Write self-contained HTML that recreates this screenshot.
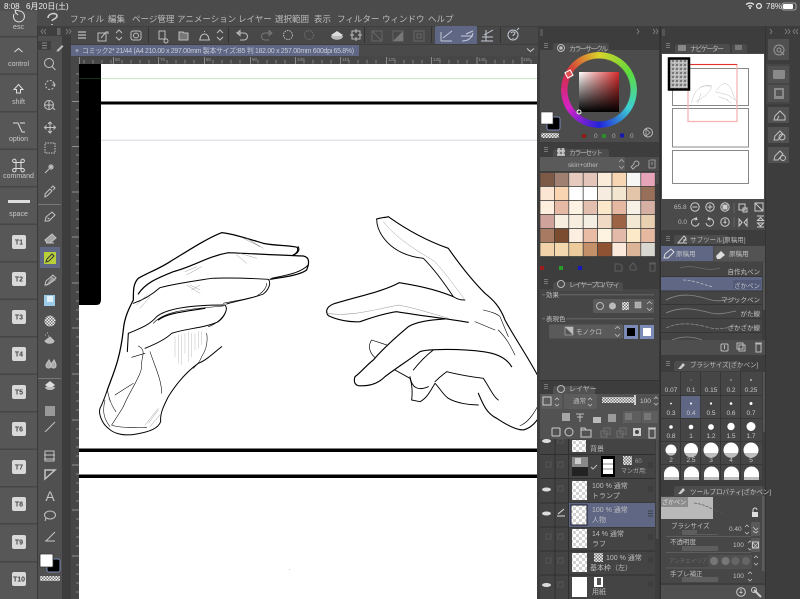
<!DOCTYPE html>
<html><head><meta charset="utf-8">
<style>
html,body{margin:0;padding:0;background:#3d3d3d;width:800px;height:599px;overflow:hidden}
#r{position:absolute;left:0;top:0;width:800px;height:599px;overflow:hidden;filter:blur(.3px)}
svg{position:absolute;left:0;top:0;display:block}
text{font-family:"Liberation Sans","Noto Sans CJK JP",sans-serif}
.w{position:absolute;left:561px;top:52px;width:76px;height:76px;border-radius:50%;opacity:.93;background:conic-gradient(#e6dc28 0deg,#5fe63c 60deg,#3cdcdc 120deg,#2020e6 180deg,#e020d0 240deg,#e02c3c 300deg,#e6dc28 360deg);-webkit-mask:radial-gradient(circle,transparent 31px,#000 32px);mask:radial-gradient(circle,transparent 31px,#000 32px)}
.s{position:absolute;left:579px;top:72px;width:40px;height:40px;background:linear-gradient(to bottom,transparent,#000),linear-gradient(to right,#fff,#d82c2c)}
</style></head><body><div id="r">
<svg width="800" height="599" viewBox="0 0 800 599">
<defs>
<pattern id="c" width="6" height="6" patternUnits="userSpaceOnUse"><rect width="6" height="6" fill="#fff"/><rect width="3" height="3" fill="#d2d2d2"/><rect x="3" y="3" width="3" height="3" fill="#d2d2d2"/></pattern>
<pattern id="n" width="4" height="4" patternUnits="userSpaceOnUse"><rect width="4" height="4" fill="#b8b8b8"/><rect width="2" height="2" fill="#777"/><rect x="2" y="2" width="1" height="1" fill="#e0e0e0"/></pattern>
<pattern id="k" width="3" height="3" patternUnits="userSpaceOnUse"><rect width="3" height="3" fill="#eee"/><rect width="1.5" height="1.5" fill="#777"/><rect x="1.5" y="1.5" width="1.5" height="1.5" fill="#777"/></pattern>
</defs>
<rect width="800" height="599" fill="#3d3d3d"/>
<!-- top -->
<rect width="800" height="26" fill="#4b4b4b"/>
<path d="M48 18c0-5 9-6 9-2 0 3-5 3-5 5M52 24v1" fill="none" stroke="#ccc" stroke-width="1.6"/>
<g fill="#bcbcbc" font-size="8.500"><text x="70" y="22">ファイル</text><text x="108" y="22">編集</text><text x="132" y="22">ページ管理</text><text x="177" y="22">アニメーション</text><text x="238" y="22">レイヤー</text><text x="275" y="22">選択範囲</text><text x="314" y="22">表示</text><text x="337" y="22">フィルター</text><text x="382" y="22">ウィンドウ</text><text x="428" y="22">ヘルプ</text></g>
<!-- keys -->
<rect x="0" y="0" width="37" height="599" fill="#575757"/>
<rect x="0" y="0" width="37" height="11" fill="#4b4b4b" opacity=".6"/>
<g fill="#eee" font-size="8"><text x="4" y="9">8:08</text><text x="26" y="9">6月20日(土)</text><text x="766" y="9">78%</text></g>
<g fill="none" stroke="#eee" stroke-width="1.200"><path d="M746 4.500q4-3 8 0M748 6.500q2-1.500 4 0"/><circle cx="759" cy="6" r="2.400"/></g>
<circle cx="750" cy="8" r="1" fill="#eee"/>
<rect x="782" y="3" width="14" height="7" rx="2" fill="none" stroke="#bbb" stroke-width=".8"/><rect x="783" y="4" width="10" height="5" rx="1" fill="#fff"/>
<g fill="#464646"><rect y="36" width="37" height="1.500"/><rect y="73.500" width="37" height="1.500"/><rect y="111" width="37" height="1.500"/><rect y="148.500" width="37" height="1.500"/><rect y="186" width="37" height="1.500"/><rect y="223.500" width="37" height="1.500"/><rect y="261" width="37" height="1.500"/><rect y="298.500" width="37" height="1.500"/><rect y="336" width="37" height="1.500"/><rect y="373.500" width="37" height="1.500"/><rect y="411" width="37" height="1.500"/><rect y="448.500" width="37" height="1.500"/><rect y="486" width="37" height="1.500"/><rect y="523" width="37" height="1.500"/><rect y="561" width="37" height="1.500"/></g>
<g fill="#c8c8c8" font-size="7" text-anchor="middle"><text x="18.500" y="29">esc</text><text x="18.500" y="66">control</text><text x="18.500" y="104">shift</text><text x="18.500" y="141">option</text><text x="18.500" y="178">command</text><text x="18.500" y="216">space</text></g>
<g fill="none" stroke="#ddd" stroke-width="1"><path d="M14 14a5.500 5.500 0 1 0 6-3l-5-1 1 4M15 12l3 3"/><path d="M14.500 52l4-3.500 4 3.500"/><path d="M18.500 84.500l4.500 5h-2.500v3.500h-4v-3.500h-2.500z"/><path d="M13 123h5l4 9h3M20 123h5"/><path d="M16 162.500v6M21 162.500v6M16 162.500h5M16 168.500h5M16 162.500h-1.500a1.700 1.700 0 1 1 1.500-1.700zM21 162.500h1.500a1.700 1.700 0 1 0-1.500-1.700zM16 168.500h-1.500a1.700 1.700 0 1 0 1.500 1.700zM21 168.500h1.500a1.700 1.700 0 1 1-1.500 1.700z"/></g>
<rect x="8" y="200" width="22" height="3" fill="#ddd"/>
<g fill="#d9d9d9"><rect x="12" y="235" width="14" height="14" rx="2"/><rect x="12" y="272" width="14" height="14" rx="2"/><rect x="12" y="310" width="14" height="14" rx="2"/><rect x="12" y="347" width="14" height="14" rx="2"/><rect x="12" y="385" width="14" height="14" rx="2"/><rect x="12" y="422" width="14" height="14" rx="2"/><rect x="12" y="460" width="14" height="14" rx="2"/><rect x="12" y="497" width="14" height="14" rx="2"/><rect x="12" y="535" width="14" height="14" rx="2"/><rect x="12" y="572" width="14" height="14" rx="2"/></g>
<g fill="#444" font-size="7" font-weight="bold" text-anchor="middle"><text x="19" y="244.500">T1</text><text x="19" y="281.500">T2</text><text x="19" y="319.500">T3</text><text x="19" y="356.500">T4</text><text x="19" y="394.500">T5</text><text x="19" y="431.500">T6</text><text x="19" y="469.500">T7</text><text x="19" y="506.500">T8</text><text x="19" y="544.500">T9</text><text x="19" y="581.500">T10</text></g>
<!-- toolbar band -->
<rect x="38" y="26" width="762" height="18.500" fill="#3f3f3f"/>
<rect x="71" y="27" width="467" height="17" fill="#484848"/>
<rect x="37" y="26" width="1" height="573" fill="#3a3a3a"/>
<rect x="38" y="26" width="25" height="573" fill="#505050"/>
<rect x="38" y="26" width="33" height="10" fill="#3f3f3f"/>
<rect x="62" y="36" width="9" height="563" fill="#3d3d3d"/>
<rect x="38" y="41" width="13" height="9" fill="#3f3f3f"/>
<g fill="none" stroke="#888" stroke-width=".8"><path d="M43 29l-2 2.500 2 2.500M46 29l-2 2.500 2 2.500M66 29l2 2.500-2 2.500M69 29l2 2.500-2 2.500"/></g>
<rect x="57" y="28" width="3.500" height="7" fill="#666"/>
<path d="M42 43h5M42 45.500h5M42 48h5" stroke="#888"/>
<path d="M57 50l5-5 1.500 1.500-5 5h-2z" fill="#bbb"/>
<!-- toolbar icons -->
<g fill="none" stroke="#bdbdbd" stroke-width="1">
<path d="M78 32h8M78 35h8M78 38h8" stroke-width="1.300"/>
<path d="M98 33h8v8h-8zM101 38l5-6h2v2"/>
<path d="M116 33l3-3 3 3M116 37l3 3 3-3"/>
<rect x="131" y="31" width="10" height="9" rx="2"/><circle cx="136" cy="35.500" r="2.500"/>
<path d="M159 31h6v8h-6zM168 41a2 2 0 1 1 0-.1"/>
<path d="M179 38v-6h4l1 1h4v7h-9z" fill="#bdbdbd" fill-opacity=".4"/>
<path d="M199 40h11M200 40c0-8 9-8 9 0M204.500 31v1"/>
<path d="M217 33l3-3 3 3M217 37l3 3 3-3"/>
<path d="M237 33l3-2.500v5l-3-2.500h7a3.500 3.500 0 0 1 0 7h-4"/>
<path d="M272 33l-3-2.500v5zH265a3.500 3.500 0 0 0 0 7h4" stroke="#777"/>
<circle cx="288" cy="35" r="4.500" stroke-dasharray="1.500 1"/>
<circle cx="309" cy="35" r="4.500" stroke="#707070" stroke-dasharray="1.500 1"/>
<path d="M352 31h8v8h-8zM356 29v4M356 37v4M350 35h4M358 35h4"/>
<g stroke="#666"><path d="M372 31h10v10h-10zM372 31l10 10"/><path d="M393 31h10v10h-10z"/><path d="M414 31h10v10h-10zM417 34h4v4h-4z"/></g>
</g>
<path d="M331 35l6-4 6 4-6 4z" fill="#ddd"/><path d="M331 36h12c0 5-12 5-12 0z" fill="#bbb"/>
<path d="M393 41l10-10v10z" fill="#777"/>
<rect x="435" y="26" width="42" height="18" fill="#5f6785" rx="1"/>
<g fill="none" stroke="#c6cad8" stroke-width="1"><path d="M441 41h11M441 41v-9M443 38l9-7"/><path d="M462 41c7 0 10-4 11-8M461 36h12M466 34l7-3"/><path d="M482 37h11M481 41h12M484 35l9-5M486 30v11"/><circle cx="513" cy="35" r="5"/><path d="M511 33c1-2 4-1 4 0 0 2-2 1-2 3M513 38v1M517 30l2-2"/></g>
<g fill="#333"><rect x="148" y="27" width="1" height="16"/><rect x="228" y="27" width="1" height="16"/><rect x="364" y="27" width="1" height="16"/><rect x="431" y="27" width="1" height="16"/><rect x="500" y="27" width="1" height="16"/></g>
<!-- title -->
<rect x="71" y="45" width="467" height="11" fill="#4a4a4a"/>
<rect x="71" y="45" width="288" height="11" fill="#5f6785"/>
<circle cx="77" cy="50.500" r="1.500" fill="#9a9fb0"/>
<text x="82" y="53" fill="#c8ccd8" font-size="6.900" textLength="272">コミック2* 21/44 (A4 210.00 x 297.00mm 製本サイズ:B5 判 182.00 x 257.00mm 600dpi 65.8%)</text>
<path d="M527 48.500l3.500 3 3.500-3" fill="none" stroke="#ccc"/>
<!-- rulers -->
<rect x="71" y="56" width="467" height="8" fill="#474747"/>
<rect x="71" y="56" width="8" height="543" fill="#474747"/>
<path d="M84 60v3.500M93 60v3.500M102 60v3.500M111 60v3.500M122 60v3.500M131 60v3.500M140 60v3.500M149 60v3.500M167 60v3.500M176 60v3.500M185 60v3.500M194 60v3.500M213 60v3.500M222 60v3.500M231 60v3.500M240 60v3.500M258 60v3.500M267 60v3.500M276 60v3.500M285 60v3.500M304 60v3.500M313 60v3.500M322 60v3.500M331 60v3.500M349 60v3.500M358 60v3.500M367 60v3.500M376 60v3.500M395 60v3.500M404 60v3.500M413 60v3.500M422 60v3.500M440 60v3.500M449 60v3.500M458 60v3.500M467 60v3.500M486 60v3.500M495 60v3.500M504 60v3.500M513 60v3.500M531 60v3.500" stroke="#999" stroke-width=".7"/>
<path d="M79.500 57v7M113.500 57v7M158.500 57v7M204.500 57v7M250.500 57v7M295.500 57v7M340.500 57v7M386.500 57v7M431.500 57v7M477 57v7M522 57v7M72 101.500h7M72 146.500h7M72 192h7M72 237h7M72 283h7M72 328h7M72 374h7M72 420h7M72 465h7M72 510h7M72 556h7" stroke="#aaa" stroke-width=".7"/>
<path d="M76 74h3M76 83h3M76 92h3M76 110h3M76 119h3M76 128h3M76 137h3M76 155h3M76 164h3M76 173h3M76 182h3M76 201h3M76 210h3M76 219h3M76 228h3M76 246h3M76 255h3M76 264h3M76 273h3M76 292h3M76 301h3M76 310h3M76 319h3M76 337h3M76 346h3M76 355h3M76 364h3M76 383h3M76 392h3M76 401h3M76 410h3M76 429h3M76 438h3M76 447h3M76 456h3M76 474h3M76 483h3M76 492h3M76 501h3M76 519h3M76 528h3M76 537h3M76 546h3M76 565h3M76 574h3M76 583h3M76 592h3" stroke="#999" stroke-width=".7"/>
<g fill="#999" font-size="4.500"><text x="115" y="61">60</text><text x="160" y="61">70</text><text x="206" y="61">80</text><text x="252" y="61">90</text><text x="297" y="61">100</text><text x="342" y="61">110</text><text x="388" y="61">120</text><text x="433" y="61">130</text><text x="478" y="61">140</text><text x="523" y="61">150</text></g>
<!-- canvas -->
<rect x="79" y="64" width="459" height="535" fill="#fff"/>
<path d="M79 64h22v236q0 5-5 5H79z" fill="#000"/>
<rect x="101" y="78" width="437" height="1" fill="#c6ecc6"/>
<rect x="79" y="78" width="22" height="1" fill="#143014"/>
<rect x="101" y="101.500" width="437" height="3" fill="#000"/>
<rect x="101" y="139.500" width="437" height="1.500" fill="#e4e4ea"/>
<rect x="79" y="448.500" width="459" height="3.500" fill="#000"/>
<rect x="79" y="474.500" width="459" height="3.500" fill="#000"/>
<rect x="289" y="569" width="1" height="1" fill="#ccc"/>
<!-- left hand -->
<g transform="translate(90 220) scale(.3333)" fill="none" stroke="#000" stroke-width="2.800" stroke-linecap="round">
<path stroke-width="3.800" d="M52 510C70 460 90 420 100 330C103 290 120 260 130 240C130 210 130 190 145 175C170 160 210 145 240 125C290 95 350 55 395 38C430 42 470 55 520 70C560 78 600 75 622 82C626 92 620 100 610 105"/>
<path stroke-width="3.600" d="M145 222C165 190 200 175 250 155C310 140 350 110 415 98C470 100 550 105 640 108C660 112 658 130 650 150C630 165 590 170 540 178"/>
<path d="M610 105C625 100 630 90 625 80M655 135C630 160 590 165 545 175"/>
<path d="M130 250C160 240 185 225 210 203C260 190 320 182 365 175C420 172 480 175 535 178C545 190 535 210 520 222C490 235 450 240 410 252"/>
<path stroke-width="1.800" d="M530 190C530 205 515 220 500 228C470 238 430 243 400 250"/>
<path d="M115 340C150 325 175 318 200 290C230 265 310 255 405 255C415 265 405 290 385 305C340 325 290 325 245 340C225 360 190 375 165 385"/>
<path stroke-width="3.400" d="M205 300C230 280 280 275 345 265"/>
<path stroke-width="1.800" d="M190 310C220 275 280 268 400 258M355 320C380 312 405 290 410 265"/>
<path stroke-width="3.200" d="M115 340L112 395"/>
<path stroke-width="1.700" d="M180 395C195 440 215 480 215 520M145 378C170 390 155 410 155 430C160 460 120 510 100 560C85 585 75 600 65 615M125 412L165 400M75 525L130 490M52 510C60 550 70 565 78 575"/>
<path stroke-width="3" d="M395 380C370 400 350 420 325 430C290 455 260 490 235 530C220 560 210 580 212 605C205 625 180 635 140 642C100 650 70 640 55 625C35 610 25 580 30 565C40 545 45 530 52 510"/>
<path stroke-width="1.600" d="M65 615C90 625 140 622 170 622M60 620C45 600 35 580 45 540M350 340C355 370 345 395 335 410C330 425 320 435 310 445"/>
<g stroke="#888" stroke-width="1.200"><path d="M460 55l50 25M470 55l50 30M480 60l30 20M440 105l30 25M450 100l50 15M285 155l35-15M290 165l45-25M290 195l40 25M300 195l30 15M305 210l25-15M140 255l30-30M150 265l30-35M175 610l30-40M165 615l40-50M180 620l30-35M55 535l20 35"/><path d="M255 350v60M265 345v85M275 345v90M285 340v60M295 335v90M305 340v70M315 340v50M325 335v50M335 335v40" stroke="#aaa"/></g>
</g>
<!-- right hand -->
<g transform="translate(320 205) scale(.3333)" fill="none" stroke="#000" stroke-width="2.800" stroke-linecap="round">
<path stroke-width="3.400" d="M170 42C180 38 195 38 205 35C240 60 300 100 385 130C420 180 460 230 495 265C520 285 540 305 555 345C585 400 620 450 655 515"/>
<path d="M170 42C170 70 185 95 205 115C225 135 260 155 310 160C340 190 370 230 400 275C415 285 425 285 435 285"/>
<path stroke="#999" stroke-width="1.400" d="M190 50C230 100 280 130 345 170C380 210 410 250 435 285"/>
<path stroke-width="3.400" d="M400 275C340 250 280 240 238 233C190 260 110 275 40 297C20 305 15 320 25 332C50 345 90 352 120 350C150 340 190 325 230 320C290 330 370 340 445 352"/>
<path stroke="#999" stroke-width="1.700" d="M22 325C80 335 140 320 235 300C290 310 350 330 385 340"/>
<path stroke-width="3.400" d="M375 342C330 345 290 350 265 365C235 390 190 430 160 465C140 480 120 505 105 515C100 530 105 540 115 542C150 545 175 535 195 515C220 495 260 470 300 440C320 432 420 430 490 440C530 445 560 460 575 485"/>
<path stroke-width="2" d="M200 420L155 405C145 420 145 440 165 458"/>
<path d="M225 495L270 520C275 535 278 560 275 585L300 590C320 580 330 560 345 535C360 550 370 570 385 580C410 595 450 600 475 600"/>
<path d="M270 515C275 545 290 560 325 545M340 435C320 450 300 470 280 495M345 530C365 510 375 505 380 500C420 510 450 515 490 520C510 550 520 575 535 585"/>
<path stroke-width="3.400" d="M475 565C490 600 500 625 530 640C560 660 590 675 610 675C630 670 645 655 655 640"/>
<path stroke-width="1.800" d="M465 350L525 375M490 315C510 320 530 325 540 335L565 395M535 375C560 400 570 420 585 450M655 600C640 630 620 655 600 662"/>
</g>
<!-- tool icons -->
<g fill="none" stroke="#c4c4c4" stroke-width="1">
<circle cx="49" cy="63" r="4.500"/><path d="M52 66.500l3.500 3.500"/>
<circle cx="50" cy="85" r="4.500" stroke-dasharray="2 1.500"/><path d="M53 82l2 3-3 0"/>
<circle cx="49" cy="105" r="4.500"/><path d="M45 105h8M49 101v8M52 107l3 3"/>
<path d="M50 122v11M44.500 127.500h11M48 124l2-2 2 2M48 131l2 2 2-2M46.500 125.500l-2 2 2 2M53.500 125.500l2 2-2 2"/>
<rect x="45" y="143" width="10" height="10" stroke-dasharray="1.500 1"/>
<path d="M45 173l6-6M51 164v6M48 167h6M49 165l4 4M53 165l-4 4"/>
<path d="M46 196l-1 1 0-3 5-5 2 2-5 5zM51 188l2-2 2 2-2 2"/>
<path d="M45 221l1-4 6-5 3 3-6 6zM47.500 218l2 1"/>
<path d="M45 240l7-6 4 4-6 5h-3zM46 243h8" fill="#ddd" fill-opacity=".6"/>
<path d="M45 285l1-4 7-6 3 3-7 6z"/>
<path d="M50 337l4 4c-1 3-7 3-9 0z" fill="#bbb"/><path d="M45 335h1M47 333h1M48 336h1"/>
<path d="M46 366c0-3 2-4 3-6 1 2 2 3 2 5a2.500 2.500 0 0 1-5 1zM51 366c0-3 2-4 3-6 1 2 2 3 2 5a2.500 2.500 0 0 1-5 1z" fill="#aaa"/>
<path d="M45 432l10-10"/>
<path d="M45 451h9v10h-9zM44 455h11M44 459h11"/>
<path d="M45 470h10l-10 9z" stroke-width="1.500"/>
<ellipse cx="50" cy="515" rx="5.500" ry="4"/><path d="M46 518l-1 3"/>
<path d="M45 541h10M46 541l9-9"/>
</g>
<rect x="40" y="247" width="20" height="21" fill="#5f6785"/>
<rect x="44" y="252" width="12" height="12" fill="#b8cf3a"/>
<path d="M46 262l1-3 5-5 2 2-5 5z" fill="none" stroke="#333"/>
<g fill="#c4c4c4"><path d="M45 287l7-11 4 4z" opacity=".6"/>
<rect x="44" y="295" width="11" height="11" fill="#9bcbe8"/><rect x="47" y="296" width="6" height="6" fill="#e0f0fa"/>
<circle cx="50" cy="321" r="5.500" fill="url(#k)"/>
<path d="M45 385l5-4 5 4-5 4z" fill="#ddd"/><path d="M45 387h10c0 4-10 4-10 0z" fill="#bbb"/>
</g>
<rect x="45" y="406" width="10" height="10" fill="#999"/>
<text x="50" y="501" text-anchor="middle" fill="#c4c4c4" font-size="14">A</text>
<rect x="38" y="204" width="23" height="1" fill="#777"/><rect x="38" y="378" width="23" height="1" fill="#777"/>
<rect x="47" y="559" width="13" height="13" rx="2" fill="#000" stroke="#7c8ab8" stroke-width="1"/>
<rect x="40" y="554" width="13" height="13" rx="1" fill="#fff" stroke="#333" stroke-width=".8"/>
<rect x="40" y="576" width="20" height="5" fill="url(#k)" rx="1"/>
<!-- panel columns -->
<rect x="538" y="26" width="262" height="573" fill="#3d3d3d"/>
<rect x="537" y="64" width="2" height="535" fill="#3d3d3d"/>
<rect x="659.500" y="26" width="1.500" height="573" fill="#2f2f2f"/>
<rect x="765" y="26" width="1" height="573" fill="#333"/>
<rect x="540" y="29" width="3" height="7" fill="#555"/><rect x="662" y="29" width="3" height="7" fill="#555"/>
<g fill="none" stroke="#888" stroke-width=".8"><path d="M637 29l2 2.500-2 2.500M653 29l2 2.500-2 2.500M656 29l2 2.500-2 2.500M770 29l2 2.500-2 2.500M785 29l2 2.500-2 2.500M788 29l2 2.500-2 2.500M795 29l-2 2.500 2 2.500M798 29l-2 2.500 2 2.500"/></g>
<g fill="#777"><rect x="544" y="43" width="4" height="1"/><rect x="544" y="45" width="4" height="1"/><rect x="544" y="47" width="4" height="1"/><rect x="666" y="43" width="4" height="1"/><rect x="666" y="45" width="4" height="1"/><rect x="666" y="47" width="4" height="1"/></g>
<!-- color circle -->
<rect x="540" y="50" width="119" height="92" fill="#4c4c4c"/>
<path d="M553 52v-6q0-3 3-3h50q3 0 3 3v6z" fill="#4c4c4c"/>
<circle cx="561" cy="48" r="3.500" fill="none" stroke="#bbb"/><circle cx="561" cy="48" r="1.800" fill="#bbb"/>
<text x="569" y="51" fill="#bbb" font-size="7" textLength="39">カラーサークル</text>
<rect x="547" y="117" width="13" height="13" rx="2" fill="#000" stroke="#7c8ab8"/>
<rect x="541" y="112" width="12" height="12" fill="#fff" stroke="#333" stroke-width=".6"/>
<rect x="541" y="133" width="18" height="5" rx="2" fill="url(#k)"/>
<rect x="582" y="134" width="4" height="4" fill="#8c1c1c"/><rect x="602" y="134" width="4" height="4" fill="#2a8c2a"/><rect x="620" y="133.500" width="4" height="4" fill="#1818b0"/>
<g fill="#aaa" font-size="6.500"><text x="594" y="138">0</text><text x="612" y="138">0</text><text x="630" y="138">0</text></g>
<circle cx="648" cy="132.500" r="4.500" fill="none" stroke="#bbb"/><path d="M646 129v7l4-3.500z" fill="none" stroke="#bbb" stroke-width=".8"/>
<!-- color set -->
<rect x="540" y="155" width="119" height="120" fill="#3d3d3d"/>
<path d="M553 158v-6q0-3 3-3h50q3 0 3 3v6z" fill="#4c4c4c"/>
<rect x="557" y="148" width="8" height="8" fill="url(#n)"/>
<text x="569" y="155" fill="#bbb" font-size="6.800" textLength="34">カラーセット</text>
<g fill="#777"><rect x="544" y="147" width="4" height="1"/><rect x="544" y="149" width="4" height="1"/><rect x="544" y="151" width="4" height="1"/></g>
<rect x="540" y="157" width="119" height="14" fill="#4c4c4c"/><rect x="540" y="157" width="85" height="14" fill="#5a5a5a"/>
<text x="583" y="167" fill="#bbb" font-size="6.500" text-anchor="middle">skin+other</text>
<path d="M619 162l2.500-2.500 2.500 2.500M619 166l2.500 2.500 2.500-2.500M650 160h5v8h-6v-8M652 162v3" fill="none" stroke="#aaa" stroke-width=".8"/>
<path d="M631 167l3-3a2.500 2.500 0 1 1 2 2l-3 3z" fill="none" stroke="#aaa"/>
<!-- swatches -->
<g stroke="#3d3d3d" stroke-width=".7">
<rect x="540" y="172.500" width="14.400" height="14" fill="#7d5a48"/><rect x="554.400" y="172.500" width="14.400" height="14" fill="#a08070"/><rect x="568.800" y="172.500" width="14.400" height="14" fill="#e6cabd"/><rect x="583.200" y="172.500" width="14.400" height="14" fill="#e3c5ba"/><rect x="597.600" y="172.500" width="14.400" height="14" fill="#fbebd9"/><rect x="612" y="172.500" width="14.400" height="14" fill="#f8d6b3"/><rect x="626.400" y="172.500" width="14.400" height="14" fill="#f6f6f4"/><rect x="640.800" y="172.500" width="14.400" height="14" fill="#e6a4b8"/>
<rect x="540" y="186.500" width="14.400" height="14" fill="#fbe6d3"/><rect x="554.400" y="186.500" width="14.400" height="14" fill="#f9d5b2"/><rect x="568.800" y="186.500" width="14.400" height="14" fill="#fff"/><rect x="583.200" y="186.500" width="14.400" height="14" fill="#fff"/><rect x="597.600" y="186.500" width="14.400" height="14" fill="#f6ece0"/><rect x="612" y="186.500" width="14.400" height="14" fill="#f3e6d0"/><rect x="626.400" y="186.500" width="14.400" height="14" fill="#e3c6a9"/><rect x="640.800" y="186.500" width="14.400" height="14" fill="#98705a"/>
<rect x="540" y="200.500" width="14.400" height="14" fill="#fdeedd"/><rect x="554.400" y="200.500" width="14.400" height="14" fill="#e5b9a3"/><rect x="568.800" y="200.500" width="14.400" height="14" fill="#fdf3e2"/><rect x="583.200" y="200.500" width="14.400" height="14" fill="#e3bfb0"/><rect x="597.600" y="200.500" width="14.400" height="14" fill="#fbe8cb"/><rect x="612" y="200.500" width="14.400" height="14" fill="#e5b8a2"/><rect x="626.400" y="200.500" width="14.400" height="14" fill="#f7f0e6"/><rect x="640.800" y="200.500" width="14.400" height="14" fill="#d6b1a3"/>
<rect x="540" y="214.500" width="14.400" height="14" fill="#cfa39c"/><rect x="554.400" y="214.500" width="14.400" height="14" fill="#f8eee0"/><rect x="568.800" y="214.500" width="14.400" height="14" fill="#f8eee0"/><rect x="583.200" y="214.500" width="14.400" height="14" fill="#f4ede1"/><rect x="597.600" y="214.500" width="14.400" height="14" fill="#f0dac6"/><rect x="612" y="214.500" width="14.400" height="14" fill="#9c6444"/><rect x="626.400" y="214.500" width="14.400" height="14" fill="#f3e8d4"/><rect x="640.800" y="214.500" width="14.400" height="14" fill="#e9d0b0"/>
<rect x="540" y="228.500" width="14.400" height="14" fill="#a87a62"/><rect x="554.400" y="228.500" width="14.400" height="14" fill="#7c4c30"/><rect x="568.800" y="228.500" width="14.400" height="14" fill="#fdeee2"/><rect x="583.200" y="228.500" width="14.400" height="14" fill="#e9bda5"/><rect x="597.600" y="228.500" width="14.400" height="14" fill="#fdf3e0"/><rect x="612" y="228.500" width="14.400" height="14" fill="#e3b9a9"/><rect x="626.400" y="228.500" width="14.400" height="14" fill="#fbe9c8"/><rect x="640.800" y="228.500" width="14.400" height="14" fill="#e6b8a0"/>
<rect x="540" y="242.500" width="14.400" height="14" fill="#f2d2a8"/><rect x="554.400" y="242.500" width="14.400" height="14" fill="#f3d7ae"/><rect x="568.800" y="242.500" width="14.400" height="14" fill="#eecb9c"/><rect x="583.200" y="242.500" width="14.400" height="14" fill="#c4906a"/><rect x="597.600" y="242.500" width="14.400" height="14" fill="#8f5232"/><rect x="612" y="242.500" width="14.400" height="14" fill="#fbeadb"/><rect x="626.400" y="242.500" width="14.400" height="14" fill="#dcb498"/><rect x="640.800" y="242.500" width="14.400" height="14" fill="#d8d8d0"/>
</g>
<rect x="540" y="257" width="115" height="18" fill="#3d3d3d"/>
<rect x="655.500" y="172" width="3" height="12" fill="#4d4d4d"/>
<rect x="540" y="266" width="4" height="4" fill="#9a1c1c"/><rect x="559" y="266" width="4" height="4" fill="#2a9a2a"/><rect x="578" y="266" width="4" height="4" fill="#1818c0"/>
<g fill="none" stroke="#5e5e5e"><path d="M615 264h5l2 2v5h-7zM631 270c-3-2 0-5 2-7 2 2 4 4 3 7zM650 264h5v7h-5zM649 263h7"/></g>
<!-- layer property -->
<rect x="540" y="289" width="119" height="91" fill="#464646"/>
<path d="M553 291v-6q0-3 3-3h64q3 0 3 3v6z" fill="#4c4c4c"/>
<circle cx="561" cy="284" r="3.500" fill="none" stroke="#bbb"/>
<text x="569" y="287" fill="#bbb" font-size="6.900" textLength="51">レイヤープロパティ</text>
<g fill="#777"><rect x="544" y="279" width="4" height="1"/><rect x="544" y="281" width="4" height="1"/><rect x="544" y="283" width="4" height="1"/></g>
<g fill="#c0c0c0" font-size="6.500"><text x="546" y="297">効果</text><text x="546" y="321">表現色</text></g>
<rect x="542" y="294.500" width="3" height=".7" fill="#888"/><rect x="559" y="294.500" width="95" height=".7" fill="#777"/>
<rect x="542" y="318.500" width="3" height=".7" fill="#888"/><rect x="566" y="318.500" width="88" height=".7" fill="#777"/>
<rect x="593" y="299" width="61" height="14" rx="1" fill="#5a5a5a"/>
<circle cx="600" cy="306" r="3.500" fill="none" stroke="#bbb"/><circle cx="612.500" cy="306" r="3.500" fill="#bbb"/><rect x="622" y="302" width="7" height="8" fill="url(#k)"/><rect x="635" y="302" width="6" height="6" fill="#aaa" stroke="#ccc" stroke-width=".5"/>
<path d="M647 304l2.500-2.500 2.500 2.500M647 308l2.500 2.500 2.500-2.500" fill="none" stroke="#bbb" stroke-width=".8"/>
<rect x="549" y="324.500" width="74" height="14" rx="1" fill="#5a5a5a"/>
<rect x="565" y="327" width="8" height="8" fill="#555" stroke="#bbb" stroke-width=".6"/><path d="M565 327l8 8h-8z" fill="#bbb" transform="rotate(180 569 331)"/>
<text x="576" y="334" fill="#c4c4c4" font-size="6.500">モノクロ</text>
<path d="M615 329l2.500-2.500 2.500 2.500M615 334l2.500 2.500 2.500-2.500" fill="none" stroke="#bbb" stroke-width=".8"/>
<rect x="624" y="325" width="14" height="14" fill="#7c8ab8"/><rect x="640" y="325" width="14" height="14" fill="#7c8ab8"/>
<rect x="627" y="328" width="8" height="8" fill="#000"/><rect x="643" y="328" width="8" height="8" fill="#fff"/>
<!-- layer panel -->
<rect x="540" y="380" width="119" height="1" fill="#333"/>
<path d="M553 395v-6q0-3 3-3h36q3 0 3 3v6z" fill="#525252"/>
<circle cx="561" cy="389" r="3.500" fill="none" stroke="#bbb"/>
<text x="569" y="391" fill="#bbb" font-size="7">レイヤー</text>
<g fill="#777"><rect x="544" y="384" width="4" height="1"/><rect x="544" y="386" width="4" height="1"/><rect x="544" y="388" width="4" height="1"/></g>
<rect x="540" y="394" width="119" height="45" fill="#525252"/>
<rect x="541" y="394" width="21" height="15" rx="1" fill="#5c5c5c"/><rect x="564" y="394" width="33" height="15" rx="1" fill="#5c5c5c"/>
<rect x="543" y="397" width="8" height="8" fill="none" stroke="#ccc"/>
<path d="M555 400l2-2 2 2M555 404l2 2 2-2M592 400l-2-2-2 2M588 404l2 2 2-2M654 399l2-2 2 2M654 403l2 2 2-2" fill="none" stroke="#bbb" stroke-width=".8"/>
<text x="573" y="403" fill="#bbb" font-size="6.500">通常</text>
<rect x="602" y="397" width="32" height="6" fill="url(#k)"/><rect x="634" y="395" width="2" height="10" fill="#ccc"/>
<text x="640" y="403" fill="#ccc" font-size="6.500">100</text>
<g fill="#bbb"><rect x="562" y="413" width="8" height="8" opacity=".8"/><path d="M576 414h8M580 414v8M577 417h6" stroke="#bbb" stroke-width="1" fill="none"/><rect x="593" y="417" width="8" height="6"/><rect x="608" y="414" width="8" height="8" opacity=".7"/></g>
<rect x="623" y="411" width="18" height="12" fill="#5e5e5e"/><rect x="642" y="411" width="16" height="12" fill="#5e5e5e"/>
<rect x="625" y="413" width="7" height="7" fill="#777"/><rect x="644" y="413" width="7" height="7" fill="#777"/>
<g fill="none" stroke="#ccc" stroke-width="1"><rect x="552" y="428" width="8" height="8" rx="1"/><circle cx="569" cy="432" r="4"/><path d="M581 430h10v7h-10zM581 430v-2h4l1 2"/><g stroke="#707070"><rect x="601" y="431" width="6" height="6"/><rect x="604" y="428" width="6" height="6"/><rect x="617" y="431" width="6" height="6"/><rect x="620" y="428" width="6" height="6"/></g><path d="M649 429h6v9h-6zM648 428h8"/></g>
<rect x="633" y="428" width="8" height="8" fill="#ccc"/><circle cx="637" cy="432" r="2" fill="#444"/>
<!-- layers -->
<rect x="540" y="439" width="115" height="160" fill="#444"/>
<g fill="#2f2f2f"><rect x="540" y="454" width="115" height="1"/><rect x="540" y="478" width="115" height="1"/><rect x="540" y="502.500" width="115" height="1"/><rect x="540" y="526.500" width="115" height="1"/><rect x="540" y="550.500" width="115" height="1"/><rect x="540" y="574.500" width="115" height="1"/><rect x="554.500" y="439" width="1" height="160"/><rect x="568" y="439" width="1" height="160"/></g>
<rect x="569" y="503" width="86" height="24" fill="#5f6785"/>
<rect x="655" y="439" width="4" height="160" fill="#3d3d3d"/>
<rect x="656" y="439" width="2.500" height="100" fill="#505050"/>
<g fill="none" stroke="#555"><rect x="546" y="462" width="5" height="5"/><rect x="558" y="462" width="5" height="5"/><rect x="558" y="486" width="5" height="5"/><rect x="546" y="534" width="5" height="5"/><rect x="558" y="534" width="5" height="5"/><rect x="546" y="558" width="5" height="5"/><rect x="558" y="558" width="5" height="5"/><rect x="558" y="582" width="5" height="5"/><rect x="558" y="439" width="5" height="4"/></g>
<g fill="#ddd"><ellipse cx="546.500" cy="489.500" rx="4.500" ry="2"/><ellipse cx="546.500" cy="513.500" rx="4.500" ry="2"/><ellipse cx="546.500" cy="585" rx="4.500" ry="2"/><ellipse cx="546.500" cy="441" rx="4.500" ry="2"/></g>
<path d="M557 516h8M558 514l6-5" fill="none" stroke="#ddd"/>
<rect x="572" y="440" width="14" height="12" fill="url(#c)"/>
<rect x="572" y="457" width="16" height="19" fill="#888"/><rect x="572" y="467" width="16" height="9" fill="#222"/><rect x="575" y="458" width="6" height="6" fill="#ccc"/>
<path d="M591 467l2 2 4-4" fill="none" stroke="#bbb"/>
<rect x="601" y="456" width="14" height="21" fill="#000"/><rect x="603" y="459" width="10" height="15" fill="#fff"/><path d="M603 464h10M603 469h10" stroke="#888"/>
<rect x="623" y="456" width="9" height="9" fill="url(#k)"/>
<text x="635" y="463" fill="#999" font-size="6">60</text><text x="621" y="473" fill="#aaa" font-size="6">マンガ用:</text>
<rect x="572" y="481" width="15" height="19" fill="url(#c)"/>
<rect x="571" y="505" width="16" height="20" fill="url(#c)" stroke="#1c1c2c"/>
<rect x="572" y="529" width="15" height="19" fill="url(#c)"/>
<rect x="572" y="553" width="15" height="19" fill="url(#c)"/>
<rect x="572" y="577" width="15" height="20" fill="#fff"/>
<rect x="594" y="553" width="9" height="9" fill="url(#k)"/>
<rect x="594" y="577" width="9" height="10" fill="#fff"/><rect x="597" y="578" width="4" height="7" fill="#555"/>
<g fill="#bdbdbd" font-size="7"><text x="590" y="451">背景</text><text x="592" y="488">100 % 通常</text><text x="592" y="498">トランプ</text><text x="592" y="512">100 % 通常</text><text x="592" y="522">人物</text><text x="592" y="536">14 % 通常</text><text x="592" y="546">ラフ</text><text x="606" y="560">100 % 通常</text><text x="590" y="570">基本枠（左）</text><text x="592" y="594">用紙</text></g>
<path d="M648 487h5M648 489h5M648 491h5M648 511h5M648 513.500h5M648 516h5M648 535h5M648 537h5M648 539h5M648 558h5M648 560h5M648 562h5M648 582h5M648 584h5M648 586h5M648 463h5M648 465h5M648 467h5" stroke="#333" stroke-width=".8"/>
<!-- navigator -->
<path d="M675 53v-6q0-3 3-3h49q3 0 3 3v6z" fill="#4c4c4c"/>
<rect x="678" y="45" width="8" height="6" fill="#888" rx="1"/>
<text x="690" y="51" fill="#bbb" font-size="6.900" textLength="34">ナビゲーター</text>
<path d="M732 53v-6q0-3 3-3h9q3 0 3 3v6z" fill="#4a4a4a"/><rect x="735" y="45" width="7" height="5" fill="#777"/>
<rect x="661" y="53" width="104" height="147" fill="#4a4a4a"/>
<rect x="662" y="54" width="102" height="145" fill="#fff"/>
<g fill="none" stroke="#888" stroke-width="1"><rect x="672.500" y="68.500" width="76" height="37"/><rect x="672.500" y="108.500" width="76" height="38.500"/><rect x="672.500" y="150.500" width="76" height="33"/></g>
<rect x="688" y="64.500" width="49" height="57" fill="none" stroke="#f4b4b4" stroke-width="1.300"/><path d="M688 64.500h49" stroke="#e03030"/><path d="M688 64.500v6" stroke="#e03030"/>
<g transform="translate(535 0) scale(.3333)" fill="none" stroke="#aaa" stroke-width="1.100"><path d="M470 310c5-40 30-60 60-50-5 20-35 40-48 45M495 262c10-5 25-8 35-5M545 270c15-20 30-30 45 0 5 20 15 30 15 40M540 275c15 5 40 5 60 25M550 290l30 10M488 310l10-30M575 300l15 10"/></g>
<rect x="669" y="58.500" width="20" height="31" fill="url(#n)" stroke="#000" stroke-width="2.500"/>
<rect x="661" y="199" width="104" height="31" fill="#4a4a4a"/>
<g fill="#bbb" font-size="6.500"><text x="674" y="209">65.8</text><text x="678" y="224">0.0</text></g>
<g fill="none" stroke="#ccc" stroke-width="1"><circle cx="695" cy="207" r="4.200"/><path d="M692.500 207h5"/><circle cx="710" cy="207" r="4.200"/><path d="M707.500 207h5M710 204.500v5"/><circle cx="725" cy="207" r="4.200"/><rect x="723" y="205" width="4" height="4" fill="#ccc"/><path d="M739 204h6v6h-6zM743 208h4v4h-4zM755 203h8v8h-8zM755 203l8 8"/><path d="M697 219a3.800 3.800 0 1 0 2 4M696 217l1 2.500-2.500.5M708 219a3.800 3.800 0 1 1-2 4M709 217l-1 2.500 2.500.5"/><circle cx="725" cy="222" r="4.200"/><path d="M725 219v4l-1.500-1M725 223l1.500-1M739 219v7l3-3.500zM747 219v7l-3-3.500zM757 216h7M757 227h7M757.500 220.500l3-3 3 3zM757.500 223l3 3 3-3z"/></g>
<path d="M734 203v10M734 217v10" stroke="#666"/>
<!-- sub tool -->
<path d="M674 244v-6q0-3 3-3h48q3 0 3 3v6z" fill="#4c4c4c"/>
<path d="M678 243l6-7 2 2-3 5zM684 243h3M683 240h4" stroke="#ccc" fill="none"/>
<text x="690" y="242" fill="#bbb" font-size="6.500">サブツール[原稿用]</text>
<g fill="#777"><rect x="666" y="236" width="4" height="1"/><rect x="666" y="238" width="4" height="1"/><rect x="666" y="240" width="4" height="1"/><rect x="666" y="361" width="4" height="1"/><rect x="666" y="363" width="4" height="1"/><rect x="666" y="365" width="4" height="1"/><rect x="666" y="486" width="4" height="1"/><rect x="666" y="488" width="4" height="1"/><rect x="666" y="490" width="4" height="1"/></g>
<rect x="661" y="246" width="104" height="16" fill="#4a4a4a"/>
<rect x="661" y="246" width="52" height="15" fill="#5f6785"/><rect x="714" y="246" width="51" height="15" fill="#535353"/>
<path d="M664 258l1-4 6-5 3 3-6 6z" fill="none" stroke="#ddd"/><path d="M716 256l5-5 4 4-5 4h-3z" fill="#ddd"/>
<g fill="#c4c4c4" font-size="6.500"><text x="676" y="256">原稿用</text><text x="729" y="256">原稿用</text></g>
<rect x="661" y="262" width="102" height="78" fill="#444"/>
<rect x="661" y="277" width="101" height="13.500" fill="#5f6785"/>
<rect x="733" y="280" width="28" height="9" fill="#525a78"/>
<rect x="762" y="262" width="3" height="78" fill="#3d3d3d"/><rect x="763" y="262" width="2" height="48" fill="#555"/>
<g fill="#333"><rect x="661" y="276" width="101" height=".8"/><rect x="661" y="290.500" width="101" height=".8"/><rect x="661" y="304" width="101" height=".8"/><rect x="661" y="318" width="101" height=".8"/><rect x="661" y="332" width="101" height=".8"/></g>
<g fill="#c4c4c4" font-size="6.500" text-anchor="end"><text x="760" y="274">自作丸ペン</text><text x="760" y="288">ざかペン</text><text x="760" y="302">マジックペン</text><text x="760" y="316">がた線</text><text x="760" y="330">ざかざか線</text></g>
<g fill="none" stroke="#888" stroke-width=".8"><path d="M680 268c15-5 25 5 40 0" stroke="#6a6a6a"/><path d="M683 280c10 0 15 3 30 7" stroke="#bbb" stroke-dasharray="3 1.500"/><path d="M666 300c15-8 30-5 45 0 8 2 15 0 25-2"/><path d="M666 313c15-7 30-4 45 0 8 2 15 0 25-2"/><path d="M666 328c15-7 30-4 45 0 8 2 15 0 25-2" stroke-dasharray="4 1"/><path d="M672 340c10-4 20-4 30 0"/></g>
<rect x="661" y="340" width="104" height="15" fill="#4e4e4e"/>
<g fill="none" stroke="#bbb"><rect x="721" y="344" width="7" height="7" rx="1"/><path d="M724.500 345v4"/><rect x="737" y="343" width="6" height="6"/><rect x="739" y="345" width="6" height="6"/><path d="M756 344h5v8h-5zM755 343h7"/></g>
<!-- brush size -->
<path d="M674 371v-7q0-3 3-3h60q3 0 3 3v7z" fill="#4c4c4c"/>
<path d="M678 369l5-6 2 2-4 4z" fill="#ccc"/>
<text x="690" y="367" fill="#bbb" font-size="6.500">ブラシサイズ[ざかペン]</text>
<rect x="661" y="372" width="101" height="108" fill="#464646"/>
<rect x="763" y="372" width="2" height="60" fill="#555"/>
<rect x="681" y="396" width="20" height="22" fill="#5f6785"/>
<path d="M680.500 372v108M700.500 372v108M720.500 372v108M740.500 372v108M661 395.500h101M661 418.500h101M661 441.500h101M661 464.500h101" stroke="#333" stroke-width=".8"/>
<g fill="#c8c8c8" font-size="6.500" text-anchor="middle"><text x="671" y="392">0.07</text><text x="691" y="392">0.1</text><text x="711" y="392">0.15</text><text x="731" y="392">0.2</text><text x="751" y="392">0.25</text><text x="671" y="415">0.3</text><text x="691" y="415">0.4</text><text x="711" y="415">0.5</text><text x="731" y="415">0.6</text><text x="751" y="415">0.7</text><text x="671" y="438">0.8</text><text x="691" y="438">1</text><text x="711" y="438">1.2</text><text x="731" y="438">1.5</text><text x="751" y="438">1.7</text></g>
<g fill="#fff"><circle cx="691" cy="380" r=".4"/><circle cx="731" cy="380" r=".6"/><circle cx="751" cy="380" r=".8"/><circle cx="671" cy="403.500" r=".9"/><circle cx="691" cy="403.500" r="1"/><circle cx="711" cy="403.500" r="1.100"/><circle cx="731" cy="403.500" r="1.300"/><circle cx="751" cy="403.500" r="1.500"/><circle cx="671" cy="427" r="1.800"/><circle cx="691" cy="427" r="2.300"/><circle cx="711" cy="427" r="2.900"/><circle cx="731" cy="426.500" r="3.700"/><circle cx="751" cy="426.500" r="4.500"/>
<circle cx="671" cy="450" r="5.500"/><circle cx="691" cy="450" r="7"/><circle cx="711" cy="450" r="7.500"/><circle cx="731" cy="450" r="7.500"/><circle cx="751" cy="450" r="7.500"/>
<path d="M664 477v-3a7.500 7.500 0 0 1 15 0v3zM684 477v-3a7.500 7.500 0 0 1 15 0v3zM704 477v-3a7.500 7.500 0 0 1 15 0v3zM724 477v-3a7.500 7.500 0 0 1 15 0v3zM744 477v-3a7.500 7.500 0 0 1 15 0v3z"/></g>
<g fill="#bdbdbd"><path d="M666.500 453h9a5.500 5.500 0 0 1-9 0zM684.500 453h13a7 7 0 0 1-13 0zM704 453h14a7.500 7.500 0 0 1-14 0zM724 453h14a7.500 7.500 0 0 1-14 0zM744 453h14a7.500 7.500 0 0 1-14 0z"/><rect x="664" y="477" width="15" height="3"/><rect x="684" y="477" width="15" height="3"/><rect x="704" y="477" width="15" height="3"/><rect x="724" y="477" width="15" height="3"/><rect x="744" y="477" width="15" height="3"/></g>
<g fill="#c8c8c8" font-size="6.500" text-anchor="middle"><text x="671" y="462">2</text><text x="691" y="462">2.5</text><text x="711" y="462">3</text><text x="731" y="462">4</text><text x="751" y="462">5</text></g>
<rect x="661" y="480" width="104" height="5" fill="#3d3d3d"/>
<!-- tool property -->
<rect x="661" y="481" width="104" height="15" fill="#3d3d3d"/>
<path d="M674 496v-7q0-3 3-3h84q3 0 3 3v7z" fill="#4c4c4c"/>
<path d="M678 494l5-6 2 2-4 4z" fill="#ccc"/>
<text x="690" y="494" fill="#c4c4c4" font-size="6.500">ツールプロパティ[ざかペン]</text>
<rect x="661" y="496" width="104" height="87" fill="#474747"/>
<rect x="661" y="497" width="52" height="22" fill="#b9b9b9"/>
<rect x="661" y="497" width="27" height="10" fill="#8c8c8c"/>
<text x="662" y="504.500" fill="#e0e0e0" font-size="6">ざかペン</text>
<path d="M694 503c10 1 15 5 28 10" fill="none" stroke="#555" stroke-width=".7" stroke-dasharray="3 1"/>
<rect x="752" y="512" width="6" height="5" fill="#ddd"/><path d="M753 512v-2a2 2 0 0 1 4 0" fill="none" stroke="#ddd"/>
<g fill="#c0c0c0" font-size="6.500"><text x="671" y="528">ブラシサイズ</text><text x="670" y="544">不透明度</text><text x="669" y="563" fill="#6d6d6d" font-size="5.500">アンチエイリアス</text><text x="670" y="576">手ブレ補正</text><text x="729" y="531">0.40</text><text x="733" y="547">100</text><text x="733" y="578">100</text></g>
<rect x="682" y="530" width="15" height="4" fill="#5e5e5e"/><path d="M682 534.500h36" stroke="#666" stroke-width=".7"/>
<rect x="682" y="546" width="36" height="5" fill="#5e5e5e"/>
<rect x="682" y="577" width="36" height="5" fill="#5e5e5e"/>
<path d="M666 536.500h85M666 552.500h85M666 568h85" stroke="#666" stroke-width=".7"/>
<path d="M745 527l2-2 2 2M745 532l2 2 2-2M748 543l2-2 2 2M748 548l2 2 2-2M754 558l2-2 2 2M754 563l2 2 2-2M748 574l2-2 2 2M748 579l2 2 2-2" fill="none" stroke="#bbb" stroke-width=".8"/>
<rect x="751" y="522" width="9" height="14" rx="1" fill="#5a5a5a"/><rect x="751" y="538" width="9" height="14" rx="1" fill="#5a5a5a"/>
<path d="M753 527l3 3 2-2M753 531l3 2 2-2" fill="none" stroke="#ccc" stroke-width=".8"/><rect x="752.500" y="542" width="6" height="6" fill="none" stroke="#ccc"/><path d="M753 543l5 5M758 543l-5 5" stroke="#ccc" stroke-width=".6"/>
<rect x="708" y="555" width="44" height="13" fill="#505050"/>
<g fill="#777"><circle cx="714" cy="561" r="4"/><circle cx="725.500" cy="561" r="4"/><circle cx="735.500" cy="561" r="4" fill="#666"/><circle cx="746" cy="561" r="4" fill="#666"/></g>
<rect x="762" y="496" width="2.500" height="75" fill="#5c5c5c"/>
<rect x="661" y="585" width="104" height="14" fill="#505050"/>
<circle cx="741" cy="592" r="4.300" fill="none" stroke="#ccc"/><path d="M741 589v4l-1.500-1M741 593l1.500-1" stroke="#ccc" fill="none" stroke-width=".8"/>
<path d="M754 590l4 4 3 3" stroke="#ccc" fill="none" stroke-width="2"/><circle cx="754" cy="590" r="2.500" fill="none" stroke="#ccc"/>
<!-- right strip -->
<rect x="768" y="39" width="21" height="21" fill="#505050"/><circle cx="779" cy="50" r="5" fill="none" stroke="#999"/><circle cx="779" cy="50" r="2" fill="none" stroke="#999"/><path d="M781 52l3 3" stroke="#999"/>
<rect x="766" y="64" width="24" height="40" fill="#454545"/>
<rect x="768" y="66" width="21" height="17" fill="#515151"/><rect x="768" y="85" width="21" height="17" fill="#515151"/>
<rect x="773" y="70" width="12" height="9" rx="1" fill="#8a8a8a"/><rect x="774" y="88" width="10" height="11" fill="#8a8a8a"/><rect x="776" y="90" width="6" height="6" fill="#555"/>
<rect x="768" y="107" width="21" height="16" fill="#515151"/><rect x="768" y="127" width="21" height="16" fill="#515151"/><rect x="768" y="147" width="21" height="16" fill="#515151"/>
<g fill="none" stroke="#c0c0c0" stroke-width="1"><path d="M774 120l1-4 5-5 3 3 2 2v4zM777 120l2-4"/><path d="M774 140l1-4 5-5 3 3-5 6z"/><circle cx="782" cy="137" r="3"/><path d="M774 160l1-4 5-5 3 3-5 6z"/><circle cx="783" cy="158" r="2.500"/></g>
</svg>
<div class="w"></div>
<div class="s"></div>
<svg width="800" height="599" style="pointer-events:none">
<rect x="566" y="71" width="6" height="6" fill="#e05050" stroke="#fff" stroke-width="1" transform="rotate(-28 569 74)"/>
<circle cx="579" cy="112" r="2" fill="none" stroke="#fff"/>
</svg>
</div></body></html>
